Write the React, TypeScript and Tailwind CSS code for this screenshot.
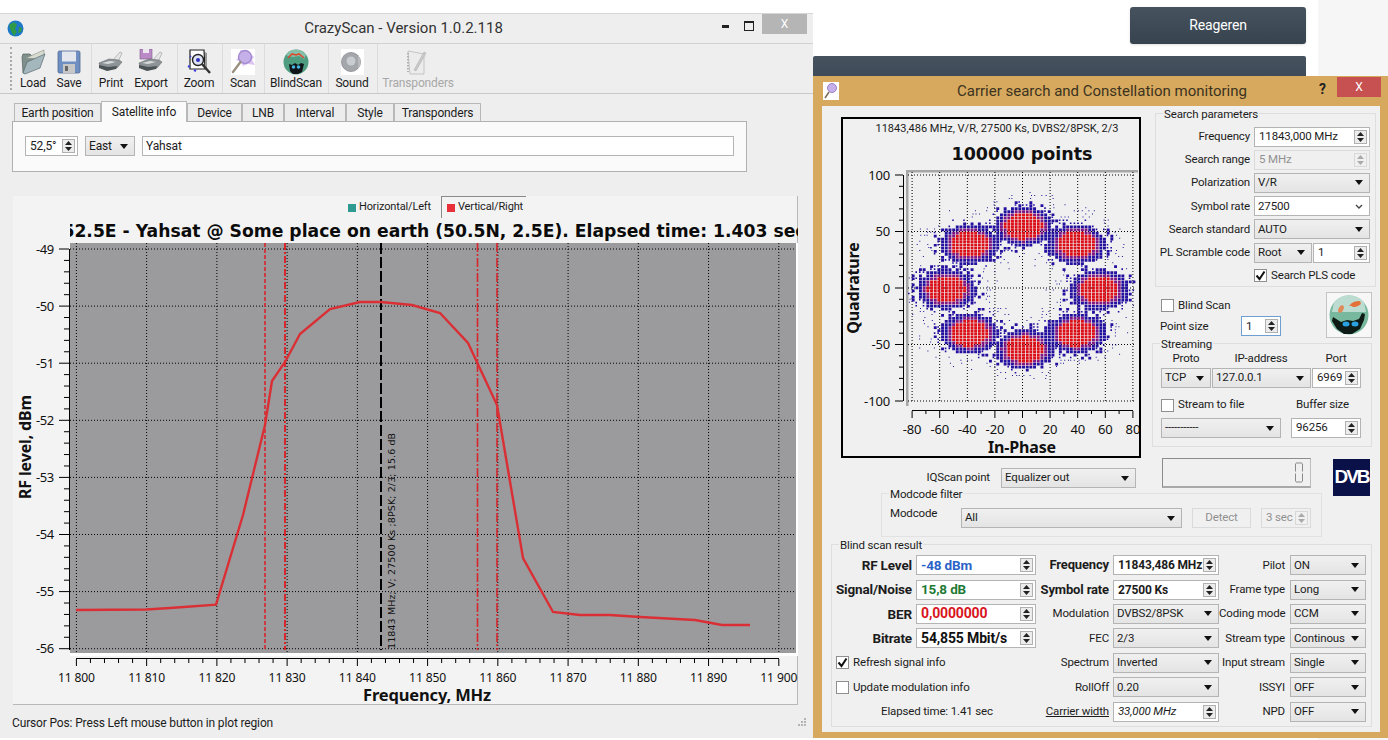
import { useMemo } from "react";

const LABEL = "'Noto Sans', sans-serif";
const HEAVY = "'DejaVu Sans', sans-serif";

function Caret({ color = "#111" }: { color?: string }) {
  return (
    <svg width="8" height="5" viewBox="0 0 8 5" className="shrink-0">
      <path d="M0 0h8L4 5z" fill={color} />
    </svg>
  );
}

function Arrows({ disabled }: { disabled?: boolean }) {
  const c = disabled ? "#aaa" : "#222";
  return (
    <div className={`flex h-full w-[13px] shrink-0 flex-col items-center justify-center gap-[2px] border ${disabled ? "border-[#d8d8d8] bg-[#f0f0f0]" : "border-[#b0b0b0] bg-[#ececec]"}`}>
      <svg width="7" height="4" viewBox="0 0 7 4"><path d="M3.5 0L7 4H0z" fill={c} /></svg>
      <svg width="7" height="4" viewBox="0 0 7 4"><path d="M0 0h7L3.5 4z" fill={c} /></svg>
    </div>
  );
}

function Spin({ value, className = "", text = "", disabled }: { value: string; className?: string; text?: string; disabled?: boolean }) {
  return (
    <div className={`flex h-[20px] items-center border py-[2px] pr-[2px] pl-[4px] ${disabled ? "border-[#dadada] bg-[#f0f0f0] text-[#909090]" : "border-[#b4b4b4] bg-white"} ${className}`}>
      <span className={`min-w-0 flex-1 whitespace-nowrap ${text}`}>{value}</span>
      <Arrows disabled={disabled} />
    </div>
  );
}

function Combo({ value, className = "", edit }: { value: string; className?: string; edit?: boolean }) {
  return (
    <div className={`flex h-[20px] items-center justify-between border border-[#b4b4b4] pr-[6px] pl-[3px] ${edit ? "bg-white" : "bg-gradient-to-b from-[#f0f0f0] to-[#e4e4e4]"} ${className}`}>
      <span className="whitespace-nowrap">{value}</span>
      {edit ? (
        <svg width="8" height="5" viewBox="0 0 8 5"><path d="M1 1l3 3 3-3" fill="none" stroke="#444" strokeWidth="1.4" /></svg>
      ) : (
        <Caret />
      )}
    </div>
  );
}

function Check({ checked, label, className = "" }: { checked?: boolean; label: string; className?: string }) {
  return (
    <div className={`flex items-center gap-[4px] whitespace-nowrap ${className}`}>
      <div className="flex h-[13px] w-[13px] shrink-0 items-center justify-center border border-[#8f8f8f] bg-white">
        {checked && (
          <svg width="11" height="11" viewBox="0 0 11 11"><path d="M1.5 5.5l3 3.5 5-7.5" fill="none" stroke="#111" strokeWidth="2" /></svg>
        )}
      </div>
      <span>{label}</span>
    </div>
  );
}

function GroupTitle({ title }: { title: string }) {
  return <span className="absolute top-[-7px] left-[7px] whitespace-nowrap bg-[#f0f0f0] px-px leading-[14px]">{title}</span>;
}

const toolbar = [
  { g: "w-[78px]", items: [{ l: "Load", w: "w-[38px]", i: "folder" }, { l: "Save", w: "w-[34px]", i: "floppy" }] },
  { g: "w-[86px]", items: [{ l: "Print", w: "w-[38px]", i: "print" }, { l: "Export", w: "w-[42px]", i: "export" }] },
  { g: "w-[45px]", items: [{ l: "Zoom", w: "w-[42px]", i: "zoom" }] },
  { g: "w-[42px]", items: [{ l: "Scan", w: "w-[40px]", i: "scan" }] },
  { g: "w-[64px]", items: [{ l: "BlindScan", w: "w-[62px]", i: "blind" }] },
  { g: "w-[49px]", items: [{ l: "Sound", w: "w-[46px]", i: "sound" }] },
];

function ToolIcon({ name }: { name: string }) {
  if (name === "folder")
    return (
      <svg width="26" height="26" viewBox="0 0 26 26">
        <path d="M2 8l1-3 7 0 2 2 5 0 0 3L6 24 3 24z" fill="#7f8f8c" stroke="#56605e" strokeWidth=".7" />
        <path d="M6 9L24 1l0 6-4 3z" fill="#d8dcd0" stroke="#8a9088" strokeWidth=".6" />
        <path d="M7 13l18-8-5 14-15 6-2-1z" fill="#a3b7bd" stroke="#5a6a70" strokeWidth=".7" />
      </svg>
    );
  if (name === "floppy")
    return (
      <svg width="24" height="24" viewBox="0 0 24 24">
        <rect x="1" y="1" width="22" height="22" rx="1.5" fill="#6f8fc2" stroke="#50688f" strokeWidth=".8" />
        <rect x="5" y="1.5" width="14" height="10" fill="#e4e8ee" />
        <rect x="6" y="14" width="12" height="9" fill="#c7c7c7" />
        <rect x="8" y="16" width="3" height="5" fill="#666" />
      </svg>
    );
  if (name === "print" || name === "export")
    return (
      <svg width="26" height="26" viewBox="0 0 26 26">
        {name === "export" && (
          <>
            <rect x="2" y="0" width="12" height="10" fill="#b98ac6" stroke="#7a5a88" strokeWidth=".6" />
            <rect x="5" y="0" width="6" height="4" fill="#ece6ee" />
          </>
        )}
        <path d="M15 11L22 3l2 1-4 9z" fill="#e6e6e6" stroke="#999" strokeWidth=".6" />
        <path d="M1 14l10-4 10 1 3 2-5 6-9 2-8-3z" fill="#8d9396" stroke="#5a5f62" strokeWidth=".5" />
        <path d="M1 16l9 2 9-1-1 3-9 2-8-3z" fill="#4c5356" />
        <path d="M4 14l8-2 6 1-8 2z" fill="#d8dcdc" />
      </svg>
    );
  if (name === "zoom")
    return (
      <svg width="26" height="26" viewBox="0 0 26 26">
        <path d="M4 1h14l1 19H4z" fill="#fff" stroke="#222" strokeWidth="1.2" />
        <path d="M19 3l2 1v16l-2 1" fill="#999" />
        <circle cx="12" cy="11" r="5.5" fill="#dfe4f5" stroke="#222" strokeWidth="1.4" />
        <circle cx="12" cy="11" r="2" fill="#3030b8" />
        <path d="M16 15l8 9" stroke="#333" strokeWidth="2.4" />
        <path d="M2 17l2 1M8 21l2 1M4 7l1 1" stroke="#4040d8" strokeWidth="2" />
      </svg>
    );
  if (name === "scan")
    return (
      <svg width="26" height="26" viewBox="0 0 26 26">
        <rect x="1" width="24" height="26" fill="#fff" />
        <path d="M10 1l9 2 5 5-2 3 3 5-7-1-5 2-3-5-4-1 4-4z" fill="#dcc6f0" />
        <circle cx="15" cy="8" r="6.5" fill="#c6b0ea" stroke="#a48ad0" strokeWidth="1.4" />
        <path d="M10.5 13L3 23" stroke="#9a9080" strokeWidth="2.4" strokeLinecap="round" />
      </svg>
    );
  if (name === "blind")
    return (
      <svg width="26" height="26" viewBox="0 0 26 26">
        <circle cx="13" cy="13" r="12.5" fill="#4f9d80" />
        <path d="M3 6a12 12 0 0 1 20 0l-2 4-5-3-6 1-5-1z" fill="#88bfa8" />
        <path d="M5 9l4-4 4 1 3-1 5 4" stroke="#d84a30" strokeWidth="1.6" fill="none" />
        <path d="M6 15l3 1 3-2 3 2 3-2 3 1-2 8-4 2-5 0-3-3z" fill="#101418" />
        <circle cx="10.5" cy="18" r="1.8" fill="#46b4e0" />
        <circle cx="15.5" cy="18" r="1.8" fill="#46b4e0" />
      </svg>
    );
  if (name === "sound")
    return (
      <svg width="26" height="26" viewBox="0 0 26 26">
        <rect x="2" width="23" height="26" fill="#fff" />
        <circle cx="12" cy="13" r="9.5" fill="#a3a6ab" stroke="#8a8c90" strokeWidth=".8" />
        <circle cx="12" cy="12" r="4.5" fill="#c9ccd0" />
        <path d="M19 6q5 7 0 14" fill="#b9bbbf" />
      </svg>
    );
  return (
    <svg width="26" height="26" viewBox="0 0 26 26">
      <path d="M3 2l16 3v20H5z" fill="#ececec" stroke="#c4c4c4" />
      <path d="M3 4v19" stroke="#b2b2b2" strokeWidth="2" strokeDasharray="1.5 1.5" />
      <path d="M9 21L19 3l2 1L11 22z" fill="#c9c9c9" stroke="#b2b2b2" strokeWidth=".6" />
    </svg>
  );
}

const tabs = [
  { l: "Earth position", c: "w-[87px]" },
  { l: "Satellite info", c: "w-[86px]", active: true },
  { l: "Device", c: "w-[55px]" },
  { l: "LNB", c: "w-[42px]" },
  { l: "Interval", c: "w-[62px]" },
  { l: "Style", c: "w-[48px]" },
  { l: "Transponders", c: "w-[87px]" },
];

// spectrum chart is drawn in page coordinates, hence the viewBox offset
const fx = (f: number) => 76.4 + (f - 11800) * 7.024;
const curve = "76,610 146,609.5 170,608 216,604.7 243,515 265,425 272,381 285,362 300,334 330,309 360,302 381,302 412,305 440,313 468,343 497,405 523,558 553,612 580,615 610,615 640,617 695,620 722,625 750,625";

function Spectrum() {
  const dbs = [-49, -50, -51, -52, -53, -54, -55, -56];
  const freqs = [11800, 11810, 11820, 11830, 11840, 11850, 11860, 11870, 11880, 11890, 11900];
  const yOf = (db: number) => 249 + (-49 - db) * 57.1;
  return (
    <svg width="785" height="461" viewBox="13 243 785 461" fontFamily={LABEL} className="block">
      <rect x="70" y="243" width="728" height="413" fill="#fff" />
      <rect x="70" y="243" width="726" height="410" fill="#9b9b9e" />
      {freqs.map((f) => (
        <line key={f} x1={fx(f)} x2={fx(f)} y1="243" y2="653" stroke="#000" strokeDasharray="1 2" />
      ))}
      {dbs.map((d) => (
        <line key={d} x1="70" x2="796" y1={yOf(d)} y2={yOf(d)} stroke="#000" strokeDasharray="1 2" />
      ))}
      <line x1="265" x2="265" y1="243" y2="650" stroke="#d8262c" strokeWidth="1.6" strokeDasharray="4 2" />
      <line x1="285" x2="285" y1="243" y2="650" stroke="#d8262c" strokeWidth="2" strokeDasharray="7 2 2 2" />
      <line x1="477.5" x2="477.5" y1="243" y2="650" stroke="#d8262c" strokeWidth="1.6" strokeDasharray="9 2 2 2" />
      <line x1="497" x2="497" y1="243" y2="650" stroke="#d8262c" strokeWidth="1.6" strokeDasharray="9 2 2 2" />
      <line x1="381" x2="381" y1="243" y2="650" stroke="#000" strokeWidth="2" strokeDasharray="11 3" />
      <polyline points={curve} fill="none" stroke="#d92f35" strokeWidth="2.4" />
      <text transform="translate(395 649) rotate(-90)" fontSize="9.5" fill="#111" fontFamily={HEAVY} textLength="216">
        11843 MHz; V; 27500 Ks ;8PSK; 2/3; 15.6 dB
      </text>
      {/* y axis */}
      <line x1="69.5" x2="69.5" y1="249" y2="650" stroke="#000" />
      {Array.from({ length: 36 }, (_, i) => {
        const y = 249 + (i * 57.1) / 5;
        return <line key={i} x1={i % 5 === 0 ? 59 : 64} x2="69" y1={y} y2={y} stroke="#000" />;
      })}
      {dbs.map((d) => (
        <text key={d} x="54" y={yOf(d) + 4.5} textAnchor="end" fontSize="13" fill="#111" textLength="18">
          {d}
        </text>
      ))}
      <text transform="translate(31 447) rotate(-90)" textAnchor="middle" fontSize="16" fontWeight="700" fill="#111">
        RF level, dBm
      </text>
      {/* x axis */}
      <line x1="76" x2="779" y1="658.5" y2="658.5" stroke="#000" />
      {Array.from({ length: 51 }, (_, i) => {
        const x = fx(11800 + i * 2);
        return <line key={i} x1={x} x2={x} y1="659" y2={i % 5 === 0 ? 666 : 663} stroke="#000" />;
      })}
      {freqs.map((f) => (
        <text key={f} x={fx(f)} y="682" textAnchor="middle" fontSize="13" fill="#111" textLength="37" lengthAdjust="spacingAndGlyphs">
          {`11 ${f - 11000}`}
        </text>
      ))}
      <text x="427" y="701" textAnchor="middle" fontSize="16" fontWeight="700" fill="#111" textLength="128" lengthAdjust="spacingAndGlyphs">
        Frequency, MHz
      </text>
    </svg>
  );
}

// constellation: page coordinates again. cells are quantized like the real plot
const centers = [
  [1022, 225], [968, 243], [1075, 243], [945, 288],
  [1098, 288], [968, 332], [1075, 332], [1023, 348],
];

function buildCloud() {
  let seed = 1234567;
  const rnd = () => {
    seed = (seed * 16807) % 2147483647;
    return seed / 2147483647;
  };
  let red = "", mid = "", blue = "", dots = "";
  for (let y = 192; y < 386; y += 3.05) {
    for (let x = 908; x < 1136; x += 3.68) {
      let d = 99;
      for (const [cx, cy] of centers) {
        d = Math.min(d, Math.hypot((x - cx) / 19, (y - cy) / 13));
      }
      const px = x.toFixed(1), py = y.toFixed(1);
      const cell = `M${px} ${py}h2.9v2.7h-2.9z`;
      if (d < 1) red += cell;
      else if (d < 1.22) mid += cell;
      else if (d < 1.55) blue += cell;
      else if (d < 2.05) {
        if (rnd() < 1.55 - d * 0.62) blue += rnd() < 0.45 ? cell : `M${px} ${py}h1.6v1.6h-1.6z`;
      } else if (d < 2.9) {
        if (rnd() < 0.38 - (d - 2.05) * 0.42) dots += `M${(x + rnd() * 2).toFixed(1)} ${py}h1v1h-1z`;
      }
    }
  }
  return { red, mid, blue, dots };
}

function Constellation() {
  const cloud = useMemo(buildCloud, []);
  const gx = [-80, -60, -40, -20, 0, 20, 40, 60, 80];
  const gy = [100, 50, 0, -50, -100];
  const xOf = (v: number) => 1022.5 + v * 1.38;
  const yOf = (v: number) => 288 - v * 1.13;
  return (
    <svg width="296" height="288" viewBox="843 168 296 288" fontFamily={LABEL} className="block">
      <rect x="906" y="170" width="232" height="2.5" fill="#a6a6a6" />
      <rect x="906" y="170" width="2.5" height="236" fill="#a6a6a6" />
      {gx.map((v) => (
        <line key={v} x1={xOf(v)} x2={xOf(v)} y1="172" y2="403" stroke="#000" strokeDasharray="1 2" />
      ))}
      {gy.map((v) => (
        <line key={v} x1="908" x2="1136" y1={yOf(v)} y2={yOf(v)} stroke="#000" strokeDasharray="1 2" />
      ))}
      <path d={cloud.dots} fill="#1c1494" />
      <path d={cloud.blue} fill="#24109e" />
      <path d={cloud.mid} fill="#7e1684" />
      <path d={cloud.red} fill="#dc0f18" />
      {/* left axis */}
      <line x1="903.5" x2="903.5" y1="175" y2="401" stroke="#000" />
      {Array.from({ length: 21 }, (_, i) => {
        const y = 175 + i * 11.3;
        return <line key={i} x1={i % 5 === 0 ? 895 : 899} x2="903" y1={y} y2={y} stroke="#000" />;
      })}
      {gy.map((v) => (
        <text key={v} x="890" y={yOf(v) + 4.5} textAnchor="end" fontSize="13" fill="#111">
          {v}
        </text>
      ))}
      <text transform="translate(859 288) rotate(-90)" textAnchor="middle" fontSize="16" fontWeight="700" fill="#111">
        Quadrature
      </text>
      {/* bottom axis */}
      <line x1="912" x2="1133" y1="410.5" y2="410.5" stroke="#000" />
      {Array.from({ length: 17 }, (_, i) => {
        const x = xOf(-80 + i * 10);
        return <line key={i} x1={x} x2={x} y1="411" y2={i % 2 === 0 ? 418 : 414} stroke="#000" />;
      })}
      {gx.map((v) => (
        <text key={v} x={xOf(v)} y="434" textAnchor="middle" fontSize="13" fill="#111">
          {v}
        </text>
      ))}
      <text x="1022" y="453" textAnchor="middle" fontSize="16" fontWeight="700" fill="#111">
        In-Phase
      </text>
    </svg>
  );
}

function FishBowl() {
  return (
    <div className="h-[46px] w-[46px] border border-[#c4c4c4] bg-[#f7f7f7] p-[2px]">
      <svg width="40" height="40" viewBox="0 0 40 40">
        <circle cx="20" cy="20" r="19.5" fill="#78b89e" />
        <path d="M5 7a20 20 0 0 1 30 0l2 10H3z" fill="#bcdcd2" />
        <ellipse cx="27" cy="9" rx="5" ry="2.5" fill="#e4703a" transform="rotate(-18 27 9)" />
        <path d="M20 11l3-3 1 3z" fill="#e4703a" />
        <ellipse cx="12" cy="14" rx="2.5" ry="4" fill="#e08a5a" transform="rotate(25 12 14)" />
        <path d="M4 22l8 5 6-2 6 1 6-2 3-6 3 1-1 6-4 9-8 5-8 0-7-5-5-8z" fill="#0e1a16" />
        <ellipse cx="17" cy="29" rx="3.5" ry="2.5" fill="#2aa0e0" />
        <ellipse cx="26" cy="29" rx="3.5" ry="2.5" fill="#2aa0e0" />
      </svg>
    </div>
  );
}

function Lcd() {
  return (
    <div className="flex h-[30px] w-[149px] items-center justify-end border-t border-r border-b-2 border-l border-t-[#8c8c8c] border-r-[#bdbdbd] border-b-[#a8a8a8] border-l-[#8c8c8c] pr-[7px]">
      <svg width="8" height="21" viewBox="0 0 8 21">
        <path d="M1 1h6M1 20h6M.5 1.5v8M7.5 1.5v8M.5 11.5v8M7.5 11.5v8" stroke="#8a8a8a" fill="none" />
      </svg>
    </div>
  );
}

const rows = [
  { bold: "RF Level", spin: "-48 dBm", t: "text-[#2a62c8] font-bold text-[13.5px]", b2: "Frequency", v2: "11843,486 MHz", l3: "Pilot", c3: "ON" },
  { bold: "Signal/Noise", spin: "15,8 dB", t: "text-[#1f7a35] font-bold text-[13.5px]", b2: "Symbol rate", v2: "27500 Ks", l3: "Frame type", c3: "Long" },
  { bold: "BER", spin: "0,0000000", t: "text-[#d8141c] font-bold text-[14px]", l2: "Modulation", c2: "DVBS2/8PSK", l3: "Coding mode", c3: "CCM" },
  { bold: "Bitrate", spin: "54,855 Mbit/s", t: "font-bold text-[14px] text-[#111]", l2: "FEC", c2: "2/3", l3: "Stream type", c3: "Continous" },
  { check: "Refresh signal info", on: true, l2: "Spectrum", c2: "Inverted", l3: "Input stream", c3: "Single" },
  { check: "Update modulation info", l2: "RollOff", c2: "0.20", l3: "ISSYI", c3: "OFF" },
  { elapsed: "Elapsed time: 1.41 sec", under: "Carrier width", ital: "33,000 MHz", l3: "NPD", c3: "OFF" },
];

function ResultGroup() {
  return (
    <div className="relative mt-[7px] ml-[9px] h-[183px] w-[541px] border border-[#dedede] pt-[8px]">
      <GroupTitle title="Blind scan result" />
      <div className="grid grid-cols-[84px_120px_77px_106px_71px_76px] auto-rows-[24.4px] items-center">
        {rows.map((r, i) => (
          <div key={i} className="contents">
            {r.bold ? (
              <>
                <span className="whitespace-nowrap pr-[4px] text-right text-[13.5px] font-bold">{r.bold}</span>
                <Spin value={r.spin} text={r.t} />
              </>
            ) : r.check ? (
              <Check checked={r.on} label={r.check} className="col-span-2 pl-[4px]" />
            ) : (
              <span className="col-span-2 pl-[49px] whitespace-nowrap">{r.elapsed}</span>
            )}
            {r.b2 ? (
              <>
                <span className="whitespace-nowrap pr-[4px] text-right text-[13px] font-bold">{r.b2}</span>
                <Spin value={r.v2} text="font-bold text-[12px]" />
              </>
            ) : r.under ? (
              <>
                <span className="whitespace-nowrap pr-[4px] text-right underline">{r.under}</span>
                <Spin value={r.ital} text="italic" />
              </>
            ) : (
              <>
                <span className="whitespace-nowrap pr-[4px] text-right">{r.l2}</span>
                <Combo value={r.c2 ?? ""} />
              </>
            )}
            <span className="whitespace-nowrap pr-[5px] text-right">{r.l3}</span>
            <Combo value={r.c3} />
          </div>
        ))}
      </div>
    </div>
  );
}

function SearchGroup() {
  return (
    <div className="relative mt-[7px] ml-[3px] h-[174px] w-[221px] border border-[#dedede] pt-[11px]">
      <GroupTitle title="Search parameters" />
      <div className="grid grid-cols-[98px_116px] auto-rows-[23.2px] items-center">
        <span className="pr-[4px] text-right">Frequency</span>
        <Spin value="11843,000 MHz" />
        <span className="pr-[4px] text-right">Search range</span>
        <Spin value="5 MHz" disabled />
        <span className="pr-[4px] text-right">Polarization</span>
        <Combo value="V/R" />
        <span className="pr-[4px] text-right">Symbol rate</span>
        <Combo value="27500" edit />
        <span className="pr-[4px] text-right whitespace-nowrap">Search standard</span>
        <Combo value="AUTO" />
        <span className="pr-[4px] text-right whitespace-nowrap">PL Scramble code</span>
        <div className="flex gap-px">
          <Combo value="Root" className="w-[58px]" />
          <Spin value="1" className="w-[57px]" />
        </div>
        <span />
        <Check checked label="Search PLS code" />
      </div>
    </div>
  );
}

function StreamGroup() {
  return (
    <div className="relative h-[104px] w-[220px] border border-[#dedede] pl-[8px]">
      <GroupTitle title="Streaming" />
      <div className="mt-[7px] flex h-[14px] items-center leading-[14px]">
        <span className="w-[50px] text-center">Proto</span>
        <span className="w-[100px] text-center">IP-address</span>
        <span className="w-[50px] text-center">Port</span>
      </div>
      <div className="mt-[3px] flex gap-px">
        <Combo value="TCP" className="w-[50px]" />
        <Combo value="127.0.0.1" className="w-[99px]" />
        <Spin value="6969" className="w-[49px]" />
      </div>
      <div className="mt-[10px] flex h-[14px] items-center">
        <Check label="Stream to file" className="w-[130px]" />
        <span className="ml-[5px]">Buffer size</span>
      </div>
      <div className="mt-[6px] flex gap-[10px]">
        <Combo value="-----------" className="w-[120px]" />
        <Spin value="96256" className="w-[70px]" />
      </div>
    </div>
  );
}

function ConstellationWindow() {
  return (
    <div className="absolute top-[76px] left-[813px] h-[662px] w-[575px] bg-[#d7a95e] text-[11.5px]">
      <div className="relative flex h-[30px] items-center">
        <svg width="16" height="18" viewBox="0 0 16 18" className="ml-[10px]">
          <rect width="16" height="18" fill="#fff" />
          <circle cx="9" cy="6" r="4.5" fill="#c6b0ea" stroke="#9b80c6" />
          <path d="M6 10l-4 6" stroke="#807060" strokeWidth="1.6" />
        </svg>
        <span className="ml-[118px] text-[15px] tracking-normal whitespace-nowrap text-[#3b3320]">Carrier search and Constellation monitoring</span>
        <span className="absolute top-[3px] left-[506px] text-[14px] font-bold text-[#222]">?</span>
        <div className="absolute top-[1px] left-[524px] flex h-[20px] w-[44px] items-center justify-center bg-[#c75050] text-[12px] text-white">X</div>
      </div>
      <div className="ml-[9px] h-[626px] w-[558px] bg-[#f0f0f0]">
        <div className="flex">
          <div className="w-[330px]">
            <div className="mt-[11px] ml-[19px] flex h-[341px] w-[300px] flex-col border-2 border-black">
              <div className="mt-[1px] h-[17px] pl-[12px] text-center text-[11px] leading-[17px] tracking-normal whitespace-nowrap">11843,486 MHz, V/R, 27500 Ks, DVBS2/8PSK, 2/3</div>
              <div className="h-[31px] pt-[4px] pl-[62px] text-center text-[17.5px] leading-[26px] font-bold tracking-normal text-[#111] [font-family:'DejaVu_Sans',sans-serif]">100000 points</div>
              <Constellation />
            </div>
            <div className="mt-[10px] flex items-center">
              <span className="w-[168px] text-right">IQScan point</span>
              <Combo value="Equalizer out" className="ml-[11px] w-[135px]" />
            </div>
          </div>
          <div className="w-[228px]">
            <SearchGroup />
            <div className="flex h-[56px] justify-between pr-[8px]">
              <div className="pt-[10px]">
                <Check label="Blind Scan" className="ml-[9px]" />
                <div className="mt-[2px] ml-[8px] flex items-center">
                  <span className="w-[81px]">Point size</span>
                  <Spin value="1" className="w-[40px] border-[#6f9fd0]!" />
                </div>
              </div>
              <div className="pt-[5px]">
                <FishBowl />
              </div>
            </div>
            <StreamGroup />
            <div className="mt-[11px] flex h-[35px] items-start pl-[10px]">
              <Lcd />
              <div className="mt-px ml-[22px] flex h-[37px] w-[37px] shrink-0 items-center justify-center bg-[#0a1048] text-[19px] font-bold tracking-[-2px] text-white [font-family:'Liberation_Sans',sans-serif]">DVB</div>
            </div>
          </div>
        </div>
        <div className="relative ml-[59px] flex h-[44px] w-[441px] border border-[#e2e2e2] pt-[14px] pl-[8px]">
          <GroupTitle title="Modcode filter" />
          <span className="mt-[-3px] w-[71px]">Modcode</span>
          <Combo value="All" className="w-[221px]" />
          <div className="ml-[10px] flex h-[20px] w-[59px] items-center justify-center border border-[#dadada] text-[#909090]">Detect</div>
          <Spin value="3 sec" disabled className="ml-[10px] w-[50px]" />
        </div>
        <ResultGroup />
      </div>
    </div>
  );
}

function ScanWindow() {
  return (
    <div className="absolute top-[13px] left-0 flex h-[725px] w-[813px] flex-col border-t border-[#d6d6d6] bg-[#eeeeee]">
      <div className="relative flex h-[30px] shrink-0 items-center justify-center border-b border-[#d2d2d2]">
        <svg width="17" height="17" viewBox="0 0 17 17" className="absolute top-[6px] left-[7px]">
          <circle cx="8.5" cy="8.5" r="8" fill="#1d78c8" />
          <path d="M2 5l5-3 3 3-2 4 2 3-3 4-3-5z" fill="#2e9a48" />
          <path d="M12 7l3 1-1 4-3 1z" fill="#2e9a48" />
        </svg>
        <span className="mr-[6px] text-[15px] tracking-normal text-[#333]">CrazyScan - Version 1.0.2.118</span>
        <span className="absolute top-[11px] left-[722px] h-[3px] w-[7px] bg-[#222]" />
        <span className="absolute top-[7px] left-[744px] h-[10px] w-[10px] border border-t-2 border-[#222]" />
        <div className="absolute top-0 left-[762px] flex h-[20px] w-[45px] items-center justify-center bg-[#b5b5b5] text-[12px] text-white">X</div>
      </div>
      <div className="flex h-[50px] shrink-0 border-b border-[#c8c8c8] pl-[14px]">
        <div className="my-[3px] ml-[-4px] w-[4px] border-l-2 border-dotted border-[#aaa]" />
        {toolbar.map((g) => (
          <div key={g.items[0].l} className={`flex border-r border-[#dcdcdc] ${g.g}`}>
            {g.items.map((it) => (
              <div key={it.l} className={`flex flex-col items-center pt-[5px] ${it.w}`}>
                <div className="flex h-[26px] items-center"><ToolIcon name={it.i} /></div>
                <span className="text-[12px] leading-[16px]">{it.l}</span>
              </div>
            ))}
          </div>
        ))}
        <div className="flex w-[80px] flex-col items-center pt-[5px]">
          <div className="flex h-[26px] items-center"><ToolIcon name="notes" /></div>
          <span className="text-[12px] leading-[16px] text-[#a8a8a8]">Transponders</span>
        </div>
      </div>
      <div className="mt-[7px] ml-[14px] flex h-[20px] shrink-0 items-end">
        {tabs.map((t) => (
          <div key={t.l} className={`flex items-center justify-center whitespace-nowrap border border-[#b8b8b8] ${t.c} ${t.active ? "relative z-10 mb-[-1px] h-[21px] border-b-0 bg-[#fafafa]" : "h-[18px] border-b-0 bg-[#ececec] pt-px"}`}>
            {t.l}
          </div>
        ))}
      </div>
      <div className="ml-[12px] flex h-[51px] w-[735px] shrink-0 gap-[7px] border border-[#b0b0b0] bg-[#fafafa] pt-[14px] pl-[12px]">
        <Spin value="52,5°" className="w-[53px]" />
        <Combo value="East" className="w-[50px]" />
        <div className="flex h-[20px] w-[592px] items-center border border-[#b4b4b4] bg-white pl-[3px]">Yahsat</div>
      </div>
      <div className="mt-[24px] ml-[13px] h-[509px] w-[785px] shrink-0 border-r border-b border-[#b8b8b8] bg-[#f3f3f3]">
        <div className="flex h-[22px] items-center pl-[335px] text-[11px]">
          <span className="mt-px h-[8px] w-[8px] shrink-0 bg-[#2f9a90]" />
          <span className="mt-px ml-[3px] w-[82px] shrink-0">Horizontal/Left</span>
          <div className="flex h-[22px] w-[85px] shrink-0 items-center border-t border-l border-[#8a8a8a] pl-[5px]">
            <span className="h-[8px] w-[8px] shrink-0 bg-[#e8303a]" />
            <span className="ml-[3px] whitespace-nowrap">Vertical/Right</span>
          </div>
        </div>
        <div className="ml-[57px] flex h-[25px] w-[728px] justify-center overflow-hidden">
          <span className="pt-px text-[17.2px] leading-[25px] font-bold tracking-normal whitespace-nowrap text-[#0b0b0b] [font-family:'DejaVu_Sans',sans-serif]">52.5E - Yahsat @ Some place on earth (50.5N, 2.5E). Elapsed time: 1.403 sec</span>
        </div>
        <Spectrum />
      </div>
      <div className="relative mt-[9px] ml-[12px] leading-[18px] whitespace-nowrap">
        Cursor Pos: Press Left mouse button in plot region
        <svg width="10" height="10" viewBox="0 0 10 10" className="absolute top-[3px] left-[785px]">
          <path d="M7 1h2v2H7zM4 4h2v2H4zM7 4h2v2H7zM1 7h2v2H1zM4 7h2v2H4zM7 7h2v2H7z" fill="#b4b4b4" />
        </svg>
      </div>
    </div>
  );
}

export default function App() {
  return (
    <div className="relative h-[740px] w-[1388px] overflow-hidden bg-[#f6f6f6] text-[12px] tracking-[-0.15px] text-[#1c1c1c] [font-family:Roboto,sans-serif]">
      <div className="flex h-[740px] w-[1318px] flex-col items-end bg-white pt-[7px] pr-[12px]">
        <div className="flex h-[37px] w-[176px] items-center justify-center rounded-[3px] bg-gradient-to-b from-[#46535f] to-[#37434f] text-[14px] text-white shadow-sm">Reageren</div>
        <div className="mt-[12px] h-[20px] w-[493px] rounded-t-[2px] bg-gradient-to-b from-[#46535f] to-[#3f4b58]" />
      </div>
      <ScanWindow />
      <ConstellationWindow />
    </div>
  );
}
